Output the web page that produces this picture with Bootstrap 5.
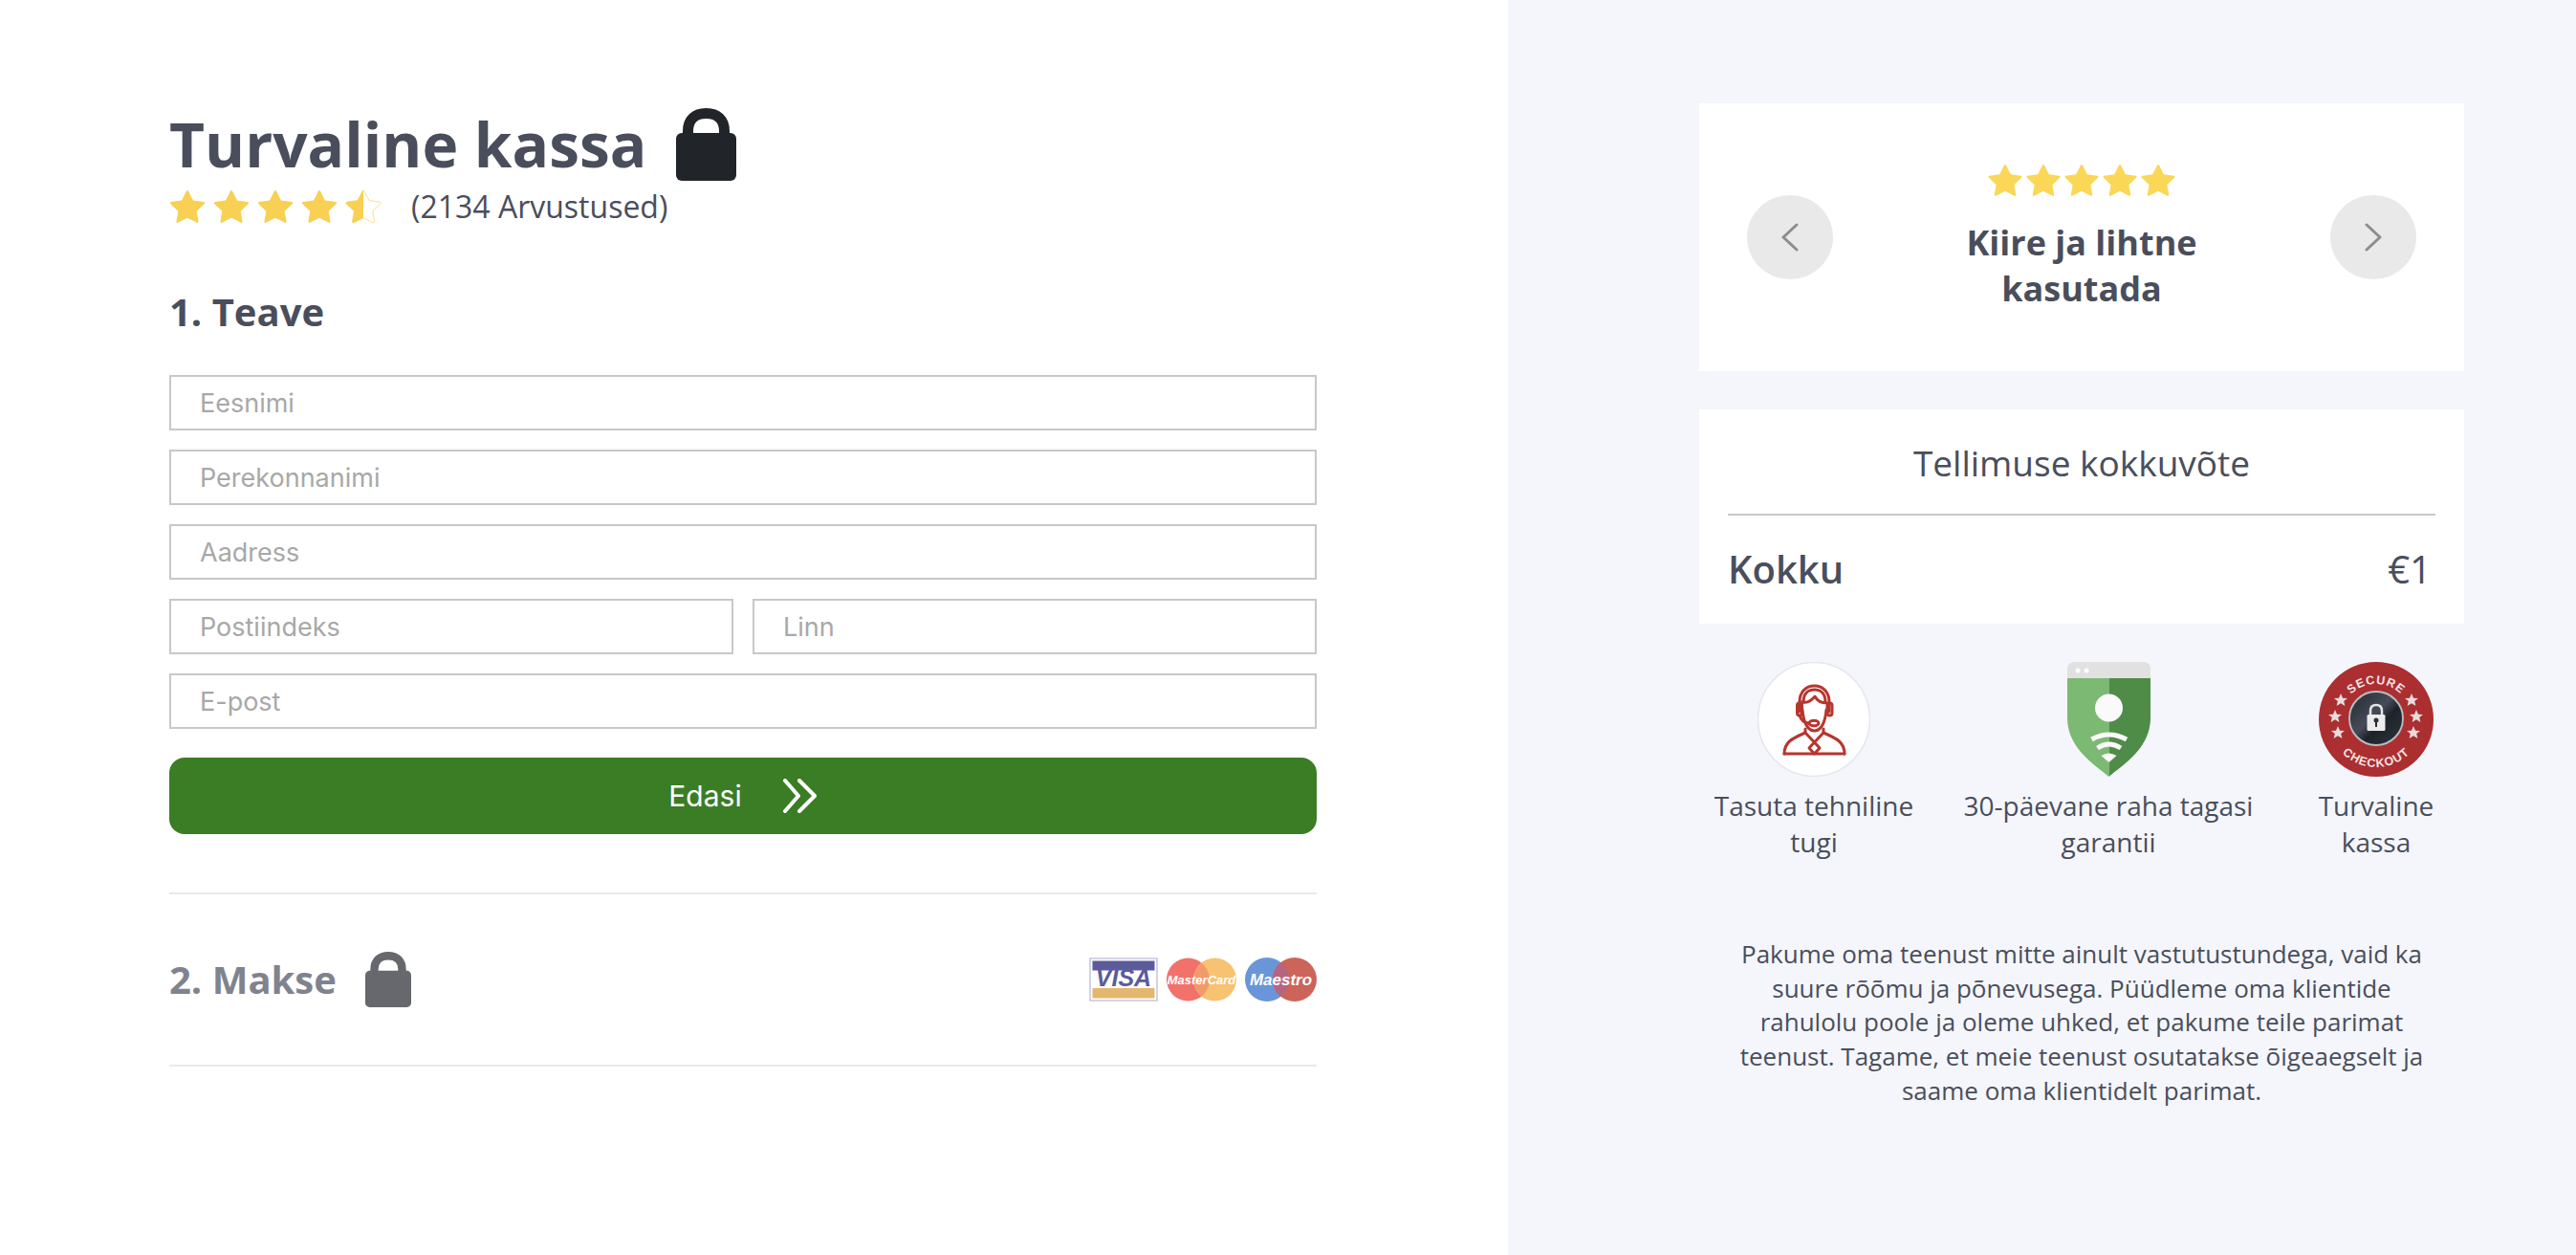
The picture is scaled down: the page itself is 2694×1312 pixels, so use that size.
<!DOCTYPE html>
<html lang="et">
<head>
<meta charset="utf-8">
<title>Turvaline kassa</title>
<link href="https://cdn.jsdelivr.net/npm/bootstrap@5.3.0/dist/css/bootstrap.min.css" rel="stylesheet">
<style>
body{font-family:"Open Sans","Noto Sans",sans-serif;color:#4a4e5c;background:#f4f6fb;}
.pane-left{width:1577px;background:#fff;padding:108px 0 0 177px;min-height:1312px;}
.pane-inner{width:1200px;}
.pane-right{width:1117px;padding:108px 0 0 200px;}
.side-inner{width:800px;}
.title-main{font-size:64px;font-weight:700;line-height:86px;margin:0;color:#4a4e5c;}
.lock-big{width:63px;height:76px;margin-left:31px;}
.rating-row{height:44px;}
.star-a{width:38px;height:36px;margin-right:8px;display:block;}
.rating-text{font-size:32px;line-height:44px;margin-left:23px;}
.step-title{font-size:40px;font-weight:700;line-height:50px;margin:63px 0 41px;color:#4a4e5c;}
.fld.form-control{height:58px;border:2px solid #c8c8c8;border-radius:0;padding:0 30px;font-family:Inter,sans-serif;font-size:27px;color:#333;box-shadow:none;}
.fld::placeholder{color:#a8a8a8;opacity:1;}
.fld-stack{gap:20px;}
.go-btn.btn{height:80px;margin-top:30px;background:#3a7d24;border:0;border-radius:16px;color:#fff;font-family:Inter,sans-serif;font-size:30px;gap:43px;}
.chev-btn{width:36px;height:36px;}
.rule-soft{height:2px;background:#e9e9e9;}
.rule-gap{margin-top:61px;}
.step-off{height:178px;}
.step-off-title{font-size:40px;font-weight:700;line-height:50px;color:#80838f;margin:0;}
.lock-small{width:48px;height:58px;margin-left:30px;}
.pay-logo{height:46px;display:block;}
.pay-row{gap:9px;}
.logo-visa{font:italic 700 25px "Liberation Sans",sans-serif;fill:#5c5b9b;}
.logo-mc{font:italic 700 13px "Liberation Sans",sans-serif;fill:#fff;}
.logo-ma{font:italic 700 17px "Liberation Sans",sans-serif;fill:#fff;}
.panel-one{height:280px;padding:0 50px;}
.round-nav{width:90px;height:88px;border-radius:50%;background:#e9e9e9;}
.quote-col{width:360px;}
.star-b{width:36px;height:35px;margin:0 2px;display:block;}
.quote-stars{margin-bottom:24px;}
.quote-text{font-size:36px;font-weight:700;line-height:48px;text-align:center;margin:0;}
.panel-two{height:224px;margin-top:40px;padding:31px 30px 0;}
.sum-title{font-size:37px;line-height:50px;text-align:center;font-weight:500;margin:0 0 28px;}
.rule-hard{height:2px;background:#c8c8c8;}
.sum-row{margin-top:28px;font-size:40px;line-height:56px;padding-right:4px;font-weight:600;}
.sum-row .val{font-weight:500;}
.trust-row{margin-top:40px;}
.trust-a{width:240px;}.trust-b{width:376px;}.trust-c{width:184px;}
.trust-pic{height:120px;display:block;}
.trust-text{font-size:28px;line-height:38px;text-align:center;margin-top:11px;}
.seal-txt{font:700 12.5px "Liberation Sans",sans-serif;fill:#f3e4e4;letter-spacing:1px;}
.about-text{font-size:26px;line-height:35.7px;text-align:center;width:740px;margin:81px auto 0;}
</style>
</head>
<body>
<svg width="0" height="0" class="d-block position-absolute">
  <defs>
    <path id="star" d="M3.612 15.443c-.386.198-.824-.149-.746-.592l.83-4.730L.173 6.765c-.329-.314-.158-.888.283-.95l4.898-.696L7.538.792c.197-.39.73-.39.927 0l2.184 4.327 4.898.696c.441.062.612.636.282.95l-3.522 3.356.83 4.730c.078.443-.36.79-.746.592L8 13.187l-4.389 2.256z"/>
    <linearGradient id="half"><stop offset="50%" stop-color="#f8d053"/><stop offset="50%" stop-color="#fff"/></linearGradient>
    <linearGradient id="metal" x1="0" y1="0" x2="1" y2="1"><stop offset="0" stop-color="#23282f"/><stop offset=".45" stop-color="#454c58"/><stop offset=".6" stop-color="#1e2329"/><stop offset="1" stop-color="#2f353e"/></linearGradient>
    <g id="lock"><path d="M12.5 30V24C12.5 12 20 5.500 31.500 5.500S50.500 12 50.500 24V30" fill="none" stroke="currentColor" stroke-width="11"/><rect x="0" y="26" width="63" height="50" rx="6" fill="currentColor"/></g>
    <g id="sealstar"><polygon points="0,-7 2,-2.300 7,-2.100 3.200,1.100 4.400,6 0,3.300 -4.400,6 -3.200,1.100 -7,-2.100 -2,-2.300" fill="#e8dcdc"/></g>
  </defs>
</svg>
<div class="d-flex">
  <main class="pane-left">
    <div class="pane-inner">
      <div class="d-flex align-items-center">
        <h1 class="title-main">Turvaline kassa</h1>
        <svg class="lock-big" viewBox="0 0 63 76" style="color:#212529"><use href="#lock"/></svg>
      </div>
      <div class="d-flex align-items-center rating-row">
        <svg class="star-a" viewBox="0 0 16 16" fill="#f8d053"><use href="#star"/></svg>
        <svg class="star-a" viewBox="0 0 16 16" fill="#f8d053"><use href="#star"/></svg>
        <svg class="star-a" viewBox="0 0 16 16" fill="#f8d053"><use href="#star"/></svg>
        <svg class="star-a" viewBox="0 0 16 16" fill="#f8d053"><use href="#star"/></svg>
        <svg class="star-a" viewBox="0 0 16 16" fill="url(#half)" stroke="#f8d053" stroke-width=".3"><use href="#star"/></svg>
        <span class="rating-text">(2134 Arvustused)</span>
      </div>
      <h2 class="step-title">1. Teave</h2>
      <form class="d-flex flex-column fld-stack">
        <input class="form-control fld" type="text" placeholder="Eesnimi">
        <input class="form-control fld" type="text" placeholder="Perekonnanimi">
        <input class="form-control fld" type="text" placeholder="Aadress">
        <div class="d-flex fld-stack">
          <input class="form-control fld" type="text" placeholder="Postiindeks">
          <input class="form-control fld" type="text" placeholder="Linn">
        </div>
        <input class="form-control fld" type="text" placeholder="E-post">
      </form>
      <button type="button" class="btn go-btn w-100 d-flex align-items-center justify-content-center">
        <span>Edasi</span>
        <svg class="chev-btn" viewBox="0 0 36 36" fill="none" stroke="#fff" stroke-width="4" stroke-linecap="round" stroke-linejoin="round"><path d="M2 2L16 18L2 34"/><path d="M17 2L33 18L17 34"/></svg>
      </button>
      <div class="rule-soft rule-gap"></div>
      <div class="d-flex align-items-center justify-content-between step-off">
        <div class="d-flex align-items-center">
          <h2 class="step-off-title">2. Makse</h2>
          <svg class="lock-small" viewBox="0 0 63 76" style="color:#66686d"><use href="#lock"/></svg>
        </div>
        <div class="d-flex align-items-center pay-row">
          <svg class="pay-logo" width="72" viewBox="0 0 72 46"><rect x="1" y="1" width="70" height="44" fill="#fff" stroke="#c5c5de" stroke-width="1.500"/><rect x="3.500" y="3.500" width="65" height="10" fill="#5c5b9b"/><rect x="3.500" y="32" width="65" height="10.500" fill="#e3b76f"/><text class="logo-visa" x="36" y="30" text-anchor="middle">VISA</text></svg>
          <svg class="pay-logo" width="73" viewBox="0 0 73 46"><circle cx="22.500" cy="23" r="22.500" fill="#f2716b"/><circle cx="50.500" cy="23" r="22.500" fill="#f7c272"/><path d="M36.500 5.400C41.500 9.500 45 16 45 23S41.500 36.500 36.500 40.600C31.500 36.500 28 30 28 23S31.500 9.500 36.500 5.400Z" fill="#f39a6a"/><text class="logo-mc" x="36.500" y="28" text-anchor="middle">MasterCard</text></svg>
          <svg class="pay-logo" width="75" viewBox="0 0 75 46"><circle cx="23" cy="23" r="23" fill="#6a95d8"/><circle cx="52" cy="23" r="23" fill="#cc645a"/><path d="M37.500 5C42.500 9.500 46 16 46 23S42.500 36.500 37.500 41C32.500 36.500 29 30 29 23S32.500 9.500 37.500 5Z" fill="#b8647f"/><text class="logo-ma" x="37.500" y="29" text-anchor="middle">Maestro</text></svg>
        </div>
      </div>
      <div class="rule-soft"></div>
    </div>
  </main>
  <aside class="pane-right">
    <div class="side-inner">
      <div class="card border-0 rounded-0 panel-one flex-row align-items-center justify-content-between">
        <div class="round-nav d-flex align-items-center justify-content-center">
          <svg width="18" height="30" viewBox="0 0 18 30" fill="none" stroke="#8d8d8d" stroke-width="3" stroke-linecap="round" stroke-linejoin="round"><path d="M16 2L2 15L16 28"/></svg>
        </div>
        <div class="quote-col">
          <div class="d-flex justify-content-center quote-stars">
            <svg class="star-b" viewBox="0 0 16 16" fill="#fbd757"><use href="#star"/></svg>
            <svg class="star-b" viewBox="0 0 16 16" fill="#fbd757"><use href="#star"/></svg>
            <svg class="star-b" viewBox="0 0 16 16" fill="#fbd757"><use href="#star"/></svg>
            <svg class="star-b" viewBox="0 0 16 16" fill="#fbd757"><use href="#star"/></svg>
            <svg class="star-b" viewBox="0 0 16 16" fill="#fbd757"><use href="#star"/></svg>
          </div>
          <p class="quote-text">Kiire ja lihtne kasutada</p>
        </div>
        <div class="round-nav d-flex align-items-center justify-content-center">
          <svg width="18" height="30" viewBox="0 0 18 30" fill="none" stroke="#8d8d8d" stroke-width="3" stroke-linecap="round" stroke-linejoin="round"><path d="M2 2L16 15L2 28"/></svg>
        </div>
      </div>
      <div class="card border-0 rounded-0 panel-two">
        <h3 class="sum-title">Tellimuse kokkuvõte</h3>
        <div class="rule-hard"></div>
        <div class="d-flex justify-content-between sum-row"><span>Kokku</span><span class="val">€1</span></div>
      </div>
      <div class="d-flex trust-row">
        <div class="trust-a d-flex flex-column align-items-center">
          <svg class="trust-pic" width="118" viewBox="0 0 118 120">
            <ellipse cx="59" cy="60" rx="58.500" ry="59.500" fill="#fff" stroke="#e4e6ee" stroke-width="1.500"/>
            <g fill="none" stroke="#b8352e" stroke-width="3" stroke-linecap="round" stroke-linejoin="round">
              <path d="M44 52V42C44 32 50 25 59.500 25S75 32 75 42V52"/>
              <path d="M48 42C48 34 52 29 59.500 29S71 34 71 42"/>
              <rect x="41.500" y="43" width="5" height="13" rx="2.500"/>
              <rect x="73" y="43" width="5" height="13" rx="2.500"/>
              <path d="M46 42C54 44 58 38 60 36C62 40 66 43 73 43"/>
              <path d="M47 50C48 62 52 72 59.500 72S71 62 72 50"/>
              <path d="M44 56C46 62 50 64 54 64"/>
              <ellipse cx="59" cy="64" rx="5" ry="2.800"/>
              <path d="M28 96C28 84 36 80 50 74L50 70M69 70L69 74C83 80 91 84 91 96"/>
              <path d="M28 96H91"/>
              <path d="M50 74L59.500 84L69 74M59.500 84L54 90L59.500 96L65 90Z"/>
            </g>
          </svg>
          <div class="trust-text">Tasuta tehniline tugi</div>
        </div>
        <div class="trust-b d-flex flex-column align-items-center">
          <svg class="trust-pic" width="87" viewBox="0 0 87 120">
            <path d="M0 17V8Q0 0 8 0H79Q87 0 87 8V17Z" fill="#e1e1e1"/>
            <path d="M0 17H43.500V120C27 106 0 90 0 58Z" fill="#7cb972"/>
            <path d="M87 17H43.500V120C60 106 87 90 87 58Z" fill="#4f8c47"/>
            <circle cx="11" cy="9" r="2.500" fill="#fff"/><circle cx="20" cy="9" r="2.500" fill="#fff"/>
            <circle cx="43.500" cy="48" r="14.500" fill="#fafafa"/>
            <g fill="none" stroke="#fafafa" stroke-width="5"><path d="M25.500 81Q43.500 71 62 81"/><path d="M31.500 90Q43.500 82 56 90"/></g>
            <path d="M35.500 98Q43.500 93 51.500 98L43.500 105Z" fill="#fafafa"/>
          </svg>
          <div class="trust-text">30-päevane raha tagasi garantii</div>
        </div>
        <div class="trust-c d-flex flex-column align-items-center">
          <svg class="trust-pic" width="120" viewBox="0 0 120 120">
            <circle cx="60" cy="60" r="60" fill="#ab2e31"/>
            <path id="arc-top" d="M23 60A37 37 0 0 1 97 60" fill="none"/>
            <path id="arc-bot" d="M10 60A50 50 0 0 0 110 60" fill="none"/>
            <text class="seal-txt"><textPath href="#arc-top" startOffset="50%" text-anchor="middle">SECURE</textPath></text>
            <text class="seal-txt"><textPath href="#arc-bot" startOffset="50%" text-anchor="middle">CHECKOUT</textPath></text>
            <use href="#sealstar" x="23" y="40"/><use href="#sealstar" x="17" y="57"/><use href="#sealstar" x="20" y="74"/>
            <use href="#sealstar" x="97" y="40"/><use href="#sealstar" x="102" y="57"/><use href="#sealstar" x="99" y="74"/>
            <circle cx="60" cy="59" r="28" fill="url(#metal)" stroke="#b9bbbe" stroke-width="2"/>
            <path d="M54 56V51C54 47 56.500 45 60 45S66 47 66 51V56" fill="none" stroke="#e4e4e4" stroke-width="2.500"/>
            <rect x="50.500" y="55" width="19" height="17" rx="1.500" fill="#ececec"/>
            <circle cx="60" cy="61" r="2.500" fill="#2b3038"/><rect x="59" y="62" width="2" height="6" fill="#2b3038"/>
          </svg>
          <div class="trust-text">Turvaline kassa</div>
        </div>
      </div>
      <p class="about-text">Pakume oma teenust mitte ainult vastutustundega, vaid ka suure rõõmu ja põnevusega. Püüdleme oma klientide rahulolu poole ja oleme uhked, et pakume teile parimat teenust. Tagame, et meie teenust osutatakse õigeaegselt ja saame oma klientidelt parimat.</p>
    </div>
  </aside>
</div>
<script src="https://cdn.jsdelivr.net/npm/bootstrap@5.3.0/dist/js/bootstrap.bundle.min.js"></script>
</body>
</html>
